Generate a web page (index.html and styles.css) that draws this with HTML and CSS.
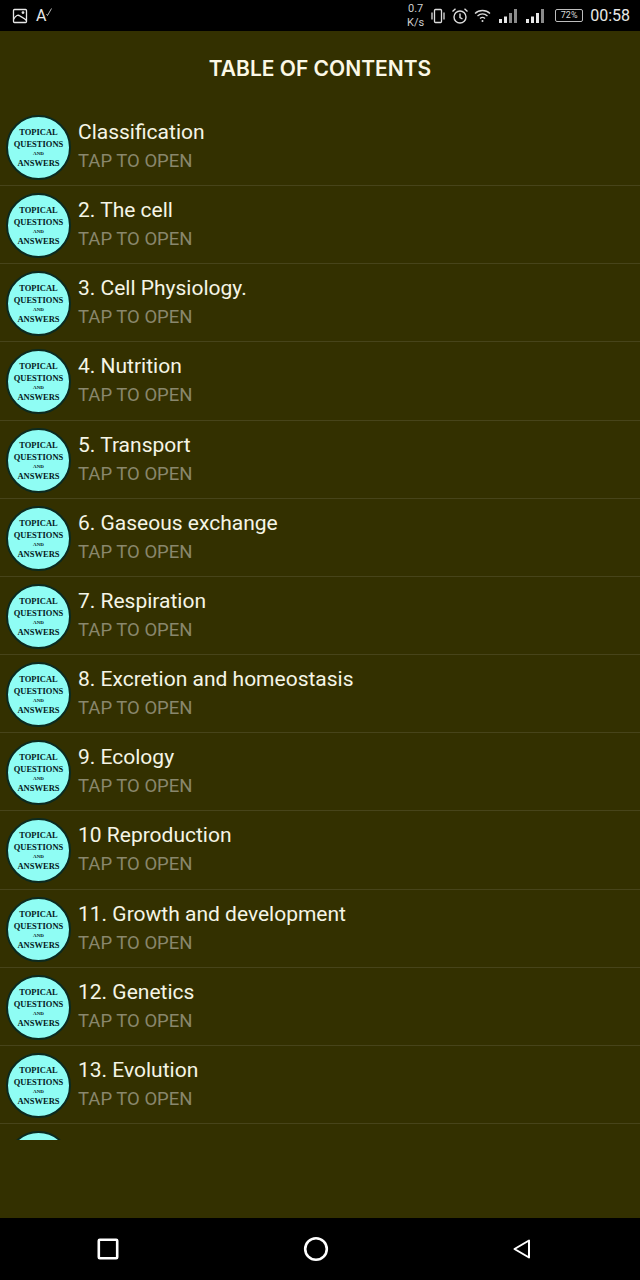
FILE: index.html
```html
<!DOCTYPE html>
<html lang="en">

<head>
    <meta charset="UTF-8">
    <meta name="viewport" content="width=device-width, initial-scale=1.0">
    <title>Table of contents</title>
    <link rel="stylesheet" href="styles.css">
</head>

<body>
    <div class="status">
        <div class="status_left">
            <svg width="16" height="16" viewBox="0 0 16 16" fill="none" stroke="#e8e8e8" stroke-width="1.3">
                <rect x="1.5" y="1.5" width="13" height="13" rx="1"></rect>
                <path d="M1.5 11.5 C4 7 6 6.5 8 8 C10 9.5 12.5 10 14.5 12.5"></path>
                <circle cx="11" cy="4.6" r="0.8"></circle>
            </svg>
            <span class="status_a">A</span>
            <svg class="status_check" width="6" height="8" viewBox="0 0 6 8" fill="none" stroke="#e8e8e8" stroke-width="0.8">
                <path d="M0.5 6 L1.5 7.5 L5.5 0.5"></path>
            </svg>
        </div>
        <div class="status_right">
            <div class="speed"><span>0.7</span><span>K/s</span></div>
            <svg width="16" height="16" viewBox="0 0 16 16" fill="none" stroke="#dcdcdc" stroke-width="1.3">
                <rect x="4.5" y="1.5" width="7" height="13" rx="1"></rect>
                <path d="M2 4.5 V11.5 M14 4.5 V11.5"></path>
            </svg>
            <svg width="18" height="18" viewBox="0 0 18 18" fill="none" stroke="#dcdcdc" stroke-width="1.4">
                <circle cx="9" cy="10" r="6"></circle>
                <path d="M9 6.5 V10.5 L11.5 12 M1.5 4.5 L4.5 1.8 M16.5 4.5 L13.5 1.8"></path>
            </svg>
            <svg width="17" height="14" viewBox="0 0 17 14" fill="none" stroke="#dcdcdc" stroke-width="1.3">
                <path d="M1 4.5 C5 0.5 12 0.5 16 4.5 M3.5 7 C6.5 4.3 10.5 4.3 13.5 7 M6 9.5 C7.5 8.2 9.5 8.2 11 9.5"></path>
                <circle cx="8.5" cy="12" r="1" fill="#dcdcdc" stroke="none"></circle>
            </svg>
            <svg class="signal" width="19" height="14" viewBox="0 0 19 14">
                <rect x="0" y="10" width="3" height="4" fill="#e8e8e8"></rect>
                <rect x="5" y="7.5" width="3" height="6.5" fill="#e8e8e8"></rect>
                <rect x="10" y="4" width="3" height="10" fill="#8a8a8a"></rect>
                <rect x="15" y="0" width="3" height="14" fill="#8a8a8a"></rect>
            </svg>
            <svg class="signal" width="19" height="14" viewBox="0 0 19 14">
                <rect x="0" y="10" width="3" height="4" fill="#e8e8e8"></rect>
                <rect x="5" y="7.5" width="3" height="6.5" fill="#e8e8e8"></rect>
                <rect x="10" y="4" width="3" height="10" fill="#e8e8e8"></rect>
                <rect x="15" y="0" width="3" height="14" fill="#8a8a8a"></rect>
            </svg>
            <div class="battery"><span>72%</span></div>
            <span class="clock">00:58</span>
        </div>
    </div>

    <div class="main">
        <h1 class="title">TABLE OF CONTENTS</h1>
        <div class="list">
            <div class="row">
                <div class="logo"><b>TOPICAL</b><b>QUESTIONS</b><i>AND</i><b>ANSWERS</b></div>
                <div class="row_text"><p class="name">Classification</p><p class="tap">TAP TO OPEN</p></div>
            </div>
            <div class="row">
                <div class="logo"><b>TOPICAL</b><b>QUESTIONS</b><i>AND</i><b>ANSWERS</b></div>
                <div class="row_text"><p class="name">2. The cell</p><p class="tap">TAP TO OPEN</p></div>
            </div>
            <div class="row">
                <div class="logo"><b>TOPICAL</b><b>QUESTIONS</b><i>AND</i><b>ANSWERS</b></div>
                <div class="row_text"><p class="name">3. Cell Physiology.</p><p class="tap">TAP TO OPEN</p></div>
            </div>
            <div class="row">
                <div class="logo"><b>TOPICAL</b><b>QUESTIONS</b><i>AND</i><b>ANSWERS</b></div>
                <div class="row_text"><p class="name">4. Nutrition</p><p class="tap">TAP TO OPEN</p></div>
            </div>
            <div class="row">
                <div class="logo"><b>TOPICAL</b><b>QUESTIONS</b><i>AND</i><b>ANSWERS</b></div>
                <div class="row_text"><p class="name">5. Transport</p><p class="tap">TAP TO OPEN</p></div>
            </div>
            <div class="row">
                <div class="logo"><b>TOPICAL</b><b>QUESTIONS</b><i>AND</i><b>ANSWERS</b></div>
                <div class="row_text"><p class="name">6. Gaseous exchange</p><p class="tap">TAP TO OPEN</p></div>
            </div>
            <div class="row">
                <div class="logo"><b>TOPICAL</b><b>QUESTIONS</b><i>AND</i><b>ANSWERS</b></div>
                <div class="row_text"><p class="name">7. Respiration</p><p class="tap">TAP TO OPEN</p></div>
            </div>
            <div class="row">
                <div class="logo"><b>TOPICAL</b><b>QUESTIONS</b><i>AND</i><b>ANSWERS</b></div>
                <div class="row_text"><p class="name">8. Excretion and homeostasis</p><p class="tap">TAP TO OPEN</p></div>
            </div>
            <div class="row">
                <div class="logo"><b>TOPICAL</b><b>QUESTIONS</b><i>AND</i><b>ANSWERS</b></div>
                <div class="row_text"><p class="name">9. Ecology</p><p class="tap">TAP TO OPEN</p></div>
            </div>
            <div class="row">
                <div class="logo"><b>TOPICAL</b><b>QUESTIONS</b><i>AND</i><b>ANSWERS</b></div>
                <div class="row_text"><p class="name">10 Reproduction</p><p class="tap">TAP TO OPEN</p></div>
            </div>
            <div class="row">
                <div class="logo"><b>TOPICAL</b><b>QUESTIONS</b><i>AND</i><b>ANSWERS</b></div>
                <div class="row_text"><p class="name">11. Growth and development</p><p class="tap">TAP TO OPEN</p></div>
            </div>
            <div class="row">
                <div class="logo"><b>TOPICAL</b><b>QUESTIONS</b><i>AND</i><b>ANSWERS</b></div>
                <div class="row_text"><p class="name">12. Genetics</p><p class="tap">TAP TO OPEN</p></div>
            </div>
            <div class="row">
                <div class="logo"><b>TOPICAL</b><b>QUESTIONS</b><i>AND</i><b>ANSWERS</b></div>
                <div class="row_text"><p class="name">13. Evolution</p><p class="tap">TAP TO OPEN</p></div>
            </div>
            <div class="row">
                <div class="logo"><b>TOPICAL</b><b>QUESTIONS</b><i>AND</i><b>ANSWERS</b></div>
            </div>
        </div>
    </div>

    <div class="nav">
        <svg width="24" height="24" viewBox="0 0 24 24" fill="none" stroke="#fff" stroke-width="2.6">
            <rect x="2.8" y="2.8" width="18.4" height="18.4" rx="1"></rect>
        </svg>
        <svg width="26" height="26" viewBox="0 0 26 26" fill="none" stroke="#fff" stroke-width="2.6">
            <circle cx="13" cy="13" r="10.8"></circle>
        </svg>
        <svg width="20" height="24" viewBox="0 0 20 24" fill="none" stroke="#fff" stroke-width="2" stroke-linejoin="round">
            <path d="M2.5 12 L17 3.5 V20.5 Z"></path>
        </svg>
    </div>
</body>

</html>
```

FILE: styles.css
```css
* {
    box-sizing: border-box;
}

html,
body {
    margin: 0;
    height: 100%;
}

body {
    display: flex;
    flex-direction: column;
    height: 1280px;
    overflow: hidden;
    background-color: #333000;
    font-family: Roboto, sans-serif;
}

p {
    margin: 0;
}

.status {
    height: 31px;
    flex: none;
    display: flex;
    justify-content: space-between;
    align-items: center;
    padding: 0 10px 0 12px;
    background-color: #000;
    color: #e8e8e8;
}

.status_left {
    display: flex;
    align-items: center;
}

.status_a {
    margin-left: 8px;
    font-size: 16px;
    line-height: 16px;
}

.status_check {
    margin: 0 0 8px 0;
}

.status_right {
    display: flex;
    align-items: center;
    gap: 5px;
}

.speed {
    display: flex;
    flex-direction: column;
    align-items: center;
    font-size: 11px;
    line-height: 14px;
    color: #cfcfcf;
    margin-right: 1px;
}

.signal {
    margin-left: 3px;
}

.battery {
    width: 28px;
    height: 13px;
    margin-left: 5px;
    border: 1px solid #bdbdbd;
    border-radius: 2px;
    font-size: 9px;
    line-height: 11px;
    text-align: center;
    color: #d8d8d8;
}

.clock {
    font-size: 16px;
    margin-left: 2px;
}

.main {
    flex: 1;
    min-height: 0;
}

.title {
    height: 77px;
    margin: 0;
    padding-top: 25px;
    font-family: Inter, sans-serif;
    font-size: 21px;
    line-height: 26px;
    font-weight: 600;
    text-align: center;
    color: #fbf8e6;
}

.list {
    height: 1032px;
    overflow: hidden;
}

.row {
    height: 78.17px;
    display: flex;
    align-items: flex-start;
    padding: 7px 0 0 6px;
    border-bottom: 1px solid #47441a;
}

.logo {
    width: 65px;
    height: 65px;
    flex: none;
    display: flex;
    flex-direction: column;
    align-items: center;
    justify-content: center;
    border-radius: 50%;
    border: 2px solid #0b2a20;
    background-color: #8ffdf4;
    color: #05201c;
    font-family: "Liberation Serif", serif;
}

.logo b {
    font-size: 8.5px;
    line-height: 12px;
    white-space: nowrap;
}

.logo i {
    font-size: 5px;
    line-height: 7px;
    font-style: normal;
    font-weight: bold;
}

.row_text {
    margin-left: 7px;
    padding-top: 3px;
}

.name {
    font-size: 21px;
    line-height: 29px;
    color: #f5f5e6;
}

.tap {
    font-size: 18.5px;
    line-height: 29px;
    color: #89876c;
}

.nav {
    height: 62px;
    flex: none;
    display: flex;
    justify-content: space-between;
    align-items: center;
    padding: 0 108px 0 96px;
    background-color: #000;
}
```
